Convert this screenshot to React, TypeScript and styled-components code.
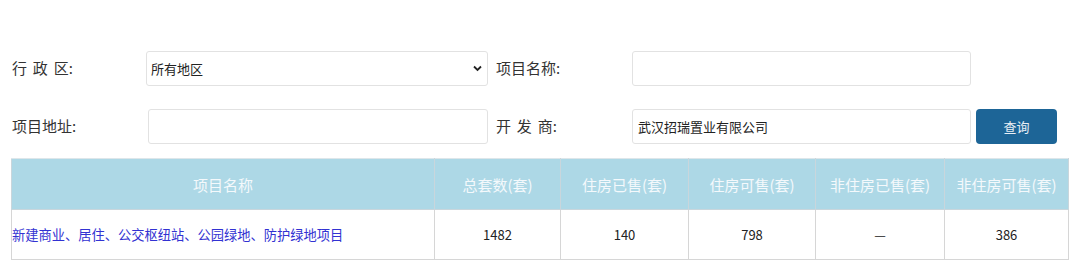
import React from 'react';
import styled, { createGlobalStyle } from 'styled-components';

const GlobalStyle = createGlobalStyle`
  html, body {
    margin: 0;
    padding: 0;
    background: #fff;
  }
  body {
    font-family: "Noto Sans CJK SC", "Noto Sans", sans-serif;
    color: #333;
  }
`;

const Page = styled.div`
  width: 1080px;
  padding-top: 51px;
`;

const SearchForm = styled.form`
  display: grid;
  grid-template-columns: 134px 342px 144px 339px 86px;
  grid-auto-rows: 35px;
  row-gap: 23px;
  padding-left: 12px;
  margin: 0;
`;

const Label = styled.label<{ $indent?: number }>`
  display: flex;
  align-items: center;
  font-size: 15px;
  color: #333;
  white-space: pre;
  word-spacing: 2.5px;
  padding-left: ${p => p.$indent || 0}px;
  padding-bottom: 2px;
`;

const SelectWrap = styled.div`
  position: relative;
  height: 35px;
`;

const StyledSelect = styled.select`
  width: 100%;
  height: 100%;
  padding: 0 20px 0 4px;
  font-family: "Noto Sans CJK SC", sans-serif;
  font-size: 13px;
  color: #222;
  background: #fff;
  border: 1px solid #e2e2e2;
  border-radius: 3px;
  appearance: none;
  outline: none;
`;

const Chevron = styled.svg`
  position: absolute;
  right: 6px;
  top: 14px;
  width: 9px;
  height: 7px;
  pointer-events: none;
`;

const StyledInput = styled.input<{ $shift?: number; $w: number }>`
  box-sizing: border-box;
  width: ${p => p.$w - (p.$shift || 0)}px;
  height: 35px;
  margin-left: ${p => p.$shift || 0}px;
  padding: 0 5px;
  font-family: "Noto Sans CJK SC", sans-serif;
  font-size: 13px;
  color: #222;
  border: 1px solid #e2e2e2;
  border-radius: 3px;
  outline: none;
`;

const SearchButton = styled.button`
  margin-left: 5px;
  width: 81px;
  height: 35px;
  border: none;
  border-radius: 4px;
  background: #1d6597;
  color: #e8eef5;
  font-family: "Noto Sans CJK SC", sans-serif;
  font-size: 13px;
  cursor: pointer;
`;

const Table = styled.table`
  margin: 14px 0 0 11px;
  border-collapse: collapse;
  table-layout: fixed;
  font-size: 13px;
`;

const HeadCell = styled.th<{ $w: number }>`
  width: ${p => p.$w}px;
  height: 50px;
  padding: 0;
  background: #add8e6;
  color: #f4f9fc;
  font-weight: normal;
  font-size: 15px;
  border: 1px solid #c9d6dc;
  border-top-color: #dde6ea;
`;

const BodyCell = styled.td<{ $left?: boolean }>`
  height: 49px;
  padding: 0;
  text-align: ${p => (p.$left ? 'left' : 'center')};
  border: 1px solid #d6d6d6;
  color: #222;
  font-size: 13px;
`;

const ProjectLink = styled.a`
  color: #3232d2;
  text-decoration: none;
  font-size: 13.25px;
`;

const columns = [
  { title: '项目名称', w: 422 },
  { title: '总套数(套)', w: 125 },
  { title: '住房已售(套)', w: 127 },
  { title: '住房可售(套)', w: 126 },
  { title: '非住房已售(套)', w: 128 },
  { title: '非住房可售(套)', w: 123 },
];

const rows = [
  {
    name: '新建商业、居住、公交枢纽站、公园绿地、防护绿地项目',
    total: '1482',
    sold: '140',
    avail: '798',
    nonSold: '—',
    nonAvail: '386',
  },
];

export default function App() {
  return (
    <Page>
      <GlobalStyle />
      <SearchForm onSubmit={e => e.preventDefault()}>
        <Label>{'行 政 区:'}</Label>
        <SelectWrap>
          <StyledSelect defaultValue="all">
            <option value="all">所有地区</option>
          </StyledSelect>
          <Chevron viewBox="0 0 9 7">
            <path d="M1 1.5 L4.5 5 L8 1.5" fill="none" stroke="#222" strokeWidth="1.8" />
          </Chevron>
        </SelectWrap>
        <Label $indent={8}>项目名称:</Label>
        <StyledInput $w={339} />
        <div />

        <Label>项目地址:</Label>
        <StyledInput $w={342} $shift={2} />
        <Label $indent={8}>{'开 发 商:'}</Label>
        <StyledInput $w={339} defaultValue="武汉招瑞置业有限公司" />
        <SearchButton type="submit">查询</SearchButton>
      </SearchForm>

      <Table>
        <thead>
          <tr>
            {columns.map(c => (
              <HeadCell key={c.title} $w={c.w}>{c.title}</HeadCell>
            ))}
          </tr>
        </thead>
        <tbody>
          {rows.map(r => (
            <tr key={r.name}>
              <BodyCell $left>
                <ProjectLink href="#">{r.name}</ProjectLink>
              </BodyCell>
              <BodyCell>{r.total}</BodyCell>
              <BodyCell>{r.sold}</BodyCell>
              <BodyCell>{r.avail}</BodyCell>
              <BodyCell>{r.nonSold}</BodyCell>
              <BodyCell>{r.nonAvail}</BodyCell>
            </tr>
          ))}
        </tbody>
      </Table>
    </Page>
  );
}
